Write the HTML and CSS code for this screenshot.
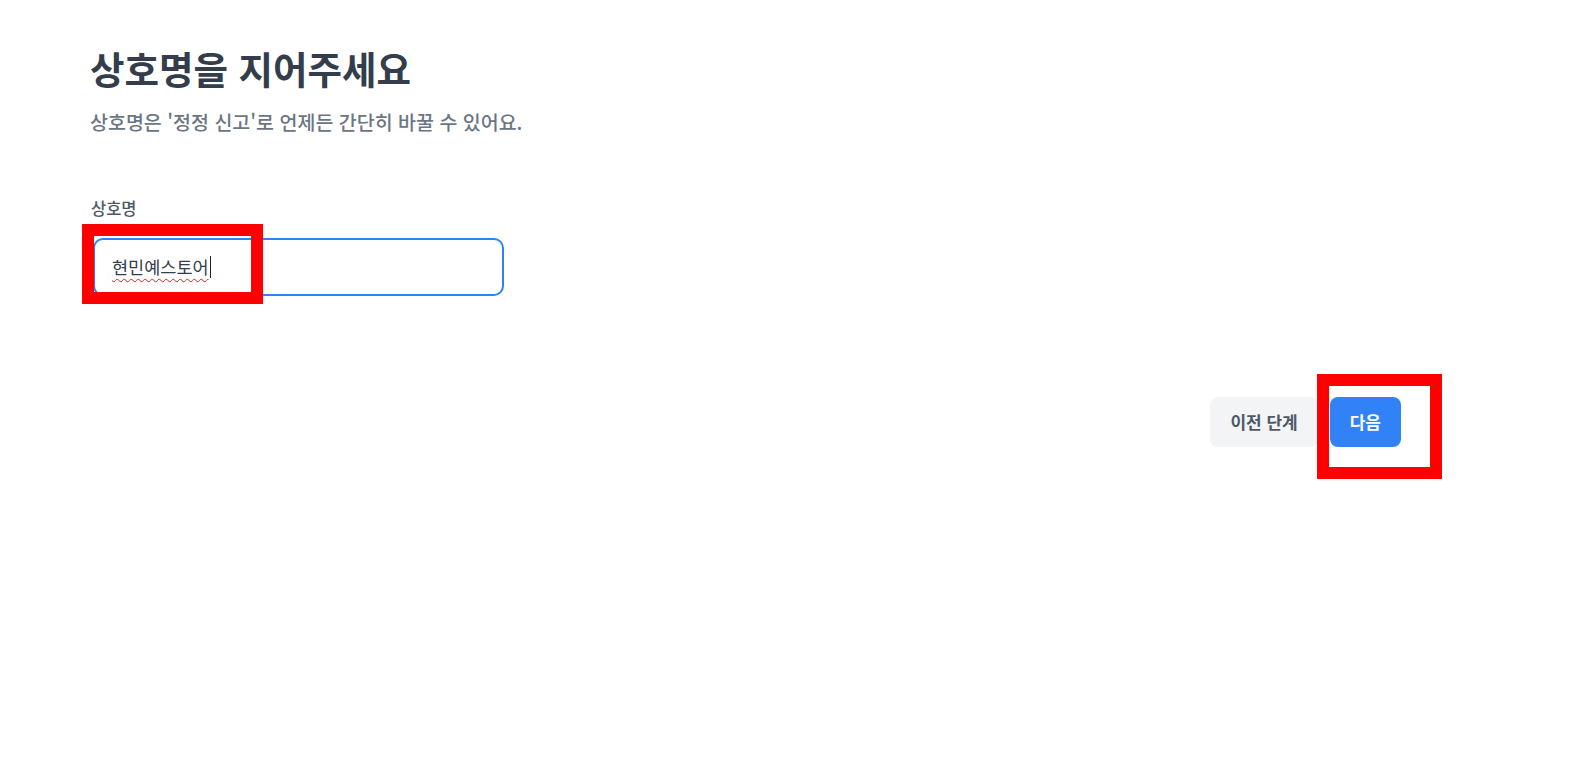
FILE: index.html
```html
<!DOCTYPE html>
<html lang="ko">
  <head>
    <meta charset="utf-8">
    <meta name="viewport" content="width=device-width, initial-scale=1">
    <title>상호명을 지어주세요</title>
    <link rel="stylesheet" href="styles.css">
  </head>
  <body>
    <section class="step">
      <header>
        <h1>상호명을 지어주세요</h1>
        <p class="desc">상호명은 '정정 신고'로 언제든 간단히 바꿀 수 있어요.</p>
      </header>

      <div class="field">
        <label class="label">상호명</label>
        <div class="input">
          <span class="typed">현민예스토어</span><span class="caret"></span>
        </div>
      </div>

      <div class="actions">
        <button class="btn btn-gray">이전 단계</button>
        <button class="btn btn-blue">다음</button>
      </div>
    </section>

    <div class="mark mark-input"></div>
    <div class="mark mark-next"></div>
  </body>
</html>
```

FILE: styles.css
```css
body {
    margin: 0;
    background: white;
    color: #333d4b;
    font-family: "Noto Sans CJK KR", "Noto Sans", sans-serif;
}

.step {
    padding: 44px 170px 0 90px;
}

h1 {
    font-size: 37.5px;
    font-weight: bold;
    line-height: 1.3;
    margin: 0;
}

.desc {
    font-size: 19.5px;
    font-weight: 500;
    color: #6b7684;
    margin: 14px 0 0;
}

.field {
    margin-top: 60px;
    width: 414px;
}

.label {
    display: block;
    font-size: 16.5px;
    font-weight: 500;
    color: #4e5968;
    padding-left: 1px;
    margin-bottom: 18px;
}

.input {
    display: flex;
    align-items: center;
    height: 54px;
    margin-left: 3px;
    padding: 0 17px;
    border: 2px solid #3182f6;
    border-radius: 10px;
    font-size: 17.5px;
    color: #333d4b;
}

.typed {
    text-decoration: underline wavy #e02020;
    text-decoration-thickness: 1px;
    text-underline-offset: 4px;
}

.caret {
    width: 1px;
    height: 22px;
    background: #191f28;
    margin-left: 1px;
}

.actions {
    display: flex;
    justify-content: flex-end;
    gap: 12px;
    margin-top: 101px;
}

.btn {
    height: 50px;
    border: none;
    border-radius: 8px;
    font-family: inherit;
    font-size: 17px;
    font-weight: bold;
    padding: 0 20px;
}

.btn-gray {
    background: #f2f4f6;
    color: #4e5968;
}

.btn-blue {
    background: #3182f6;
    color: white;
}

/* annotation boxes drawn over the screenshot */
.mark {
    position: absolute;
    border: 12px solid #ff0000;
    box-sizing: border-box;
}

.mark-input {
    left: 82px;
    top: 224px;
    width: 181px;
    height: 80px;
}

.mark-next {
    left: 1317px;
    top: 374px;
    width: 125px;
    height: 105px;
}
```
